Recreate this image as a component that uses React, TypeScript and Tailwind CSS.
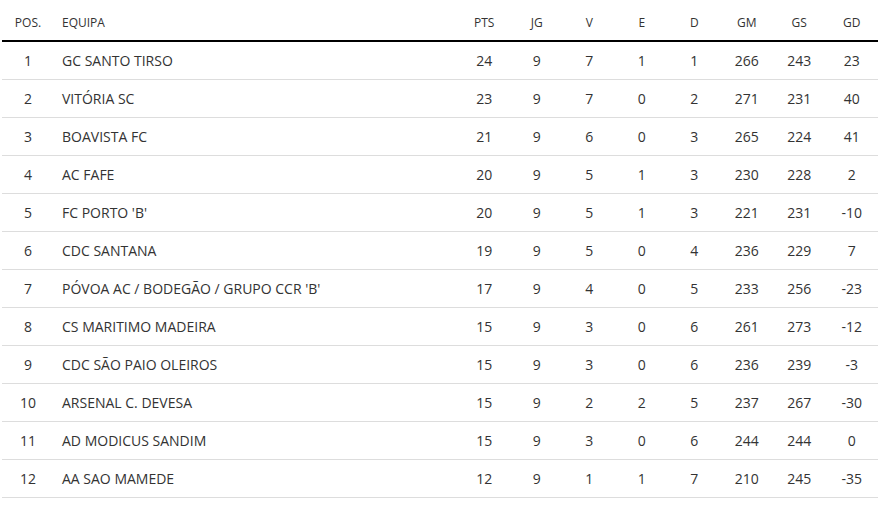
const rows: [number, string, number, number, number, number, number, number, number, number][] = [
  [1, "GC SANTO TIRSO", 24, 9, 7, 1, 1, 266, 243, 23],
  [2, "VITÓRIA SC", 23, 9, 7, 0, 2, 271, 231, 40],
  [3, "BOAVISTA FC", 21, 9, 6, 0, 3, 265, 224, 41],
  [4, "AC FAFE", 20, 9, 5, 1, 3, 230, 228, 2],
  [5, "FC PORTO 'B'", 20, 9, 5, 1, 3, 221, 231, -10],
  [6, "CDC SANTANA", 19, 9, 5, 0, 4, 236, 229, 7],
  [7, "PÓVOA AC / BODEGÃO / GRUPO CCR 'B'", 17, 9, 4, 0, 5, 233, 256, -23],
  [8, "CS MARITIMO MADEIRA", 15, 9, 3, 0, 6, 261, 273, -12],
  [9, "CDC SÃO PAIO OLEIROS", 15, 9, 3, 0, 6, 236, 239, -3],
  [10, "ARSENAL C. DEVESA", 15, 9, 2, 2, 5, 237, 267, -30],
  [11, "AD MODICUS SANDIM", 15, 9, 3, 0, 6, 244, 244, 0],
  [12, "AA SAO MAMEDE", 12, 9, 1, 1, 7, 210, 245, -35],
];

const stats = ["PTS", "JG", "V", "E", "D", "GM", "GS", "GD"];

export default function App() {
  return (
    <div className="bg-white w-[885px] h-[506px] px-[2px] text-[#333] font-['Open_Sans',sans-serif]">
      <div className="w-[876px]">
        <div className="flex items-center h-[42px] border-b-2 border-black text-[12px] pt-[5px]">
          <div className="w-[52px] text-center">POS.</div>
          <div className="w-[404px] pl-[8px]">EQUIPA</div>
          {stats.map((s) => (
            <div key={s} className="w-[52.5px] text-center">
              {s}
            </div>
          ))}
        </div>
        {rows.map((r) => (
          <div key={r[0]} className="flex items-center h-[38px] border-b border-[#ddd] text-[14px]">
            <div className="w-[52px] text-center">{r[0]}</div>
            <div className="w-[404px] pl-[8px]">{r[1]}</div>
            {r.slice(2).map((v, i) => (
              <div key={i} className="w-[52.5px] text-center">
                {v}
              </div>
            ))}
          </div>
        ))}
      </div>
    </div>
  );
}
